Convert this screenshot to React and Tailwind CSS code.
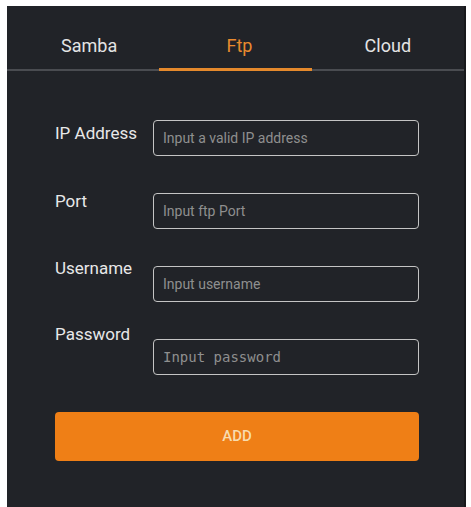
import React from 'react';

// Tab header + FTP server form
const tabs = [
  { name: 'Samba', shift: 'pl-[12px]' },
  { name: 'Ftp', shift: 'pl-[8px]' },
  { name: 'Cloud', shift: 'pl-0' },
];

const fields = [
  {
    label: 'IP Address',
    placeholder: 'Input a valid IP address',
    row: 'mt-[49px]',
    labelTop: 'mt-[2px]',
    inputTop: 'mt-0',
    mono: false,
  },
  {
    label: 'Port',
    placeholder: 'Input ftp Port',
    row: 'mt-[34px]',
    labelTop: 'mt-0',
    inputTop: 'mt-[3px]',
    mono: false,
  },
  {
    label: 'Username',
    placeholder: 'Input username',
    row: 'mt-[28px]',
    labelTop: 'mt-0',
    inputTop: 'mt-[9px]',
    mono: false,
  },
  {
    label: 'Password',
    placeholder: 'Input password',
    row: 'mt-[21px]',
    labelTop: 'mt-0',
    inputTop: 'mt-[16px]',
    mono: true,
  },
];

const App = () => {
  const active = 'Ftp';

  return (
    <div className="w-[471px] h-[507px] bg-white pl-[7px] pr-[5px] pt-[6px] font-['Roboto','Liberation_Sans',sans-serif]">
      <div className="h-full bg-[#212328] border-r-2 border-[#17181b]">
        {/* tab bar */}
        <div className="flex border-b-2 border-[#4a4c51]">
          {tabs.map((tab) => (
            <div
              key={tab.name}
              className={`flex-1 h-[65px] -mb-[2px] pt-[27px] text-center text-[18px] leading-[26px] border-b-[3px] ${
                tab.name === active
                  ? 'text-[#e98a2e] border-[#e5892c]'
                  : 'text-[#e4e4e4] border-transparent'
              }`}
            >
              <span className={tab.shift}>{tab.name}</span>
            </div>
          ))}
        </div>

        {/* form */}
        <div className="pl-[48px] pr-[45px]">
          {fields.map((f) => (
            <div key={f.label} className={`flex items-start ${f.row}`}>
              <div className={`w-[98px] shrink-0 text-[17px] leading-[22px] text-[#e8e8e8] ${f.labelTop}`}>
                {f.label}
              </div>
              <div
                className={`flex-1 h-[36px] rounded-[4px] border-[1.5px] border-[#c4c4c4] flex items-center pl-[9px] ${f.inputTop}`}
              >
                <span
                  className={
                    f.mono
                      ? "text-[#8f8f8f] text-[14px] font-['DejaVu_Sans_Mono','Liberation_Mono',monospace]"
                      : 'text-[#8f8f8f] text-[14px]'
                  }
                >
                  {f.placeholder}
                </span>
              </div>
            </div>
          ))}

          <button className="mt-[37px] w-full h-[49px] rounded-[4px] bg-[#ef7f16] text-[#f8dcae] text-[15px] font-medium">
            ADD
          </button>
        </div>
      </div>
    </div>
  );
};

export default App;
